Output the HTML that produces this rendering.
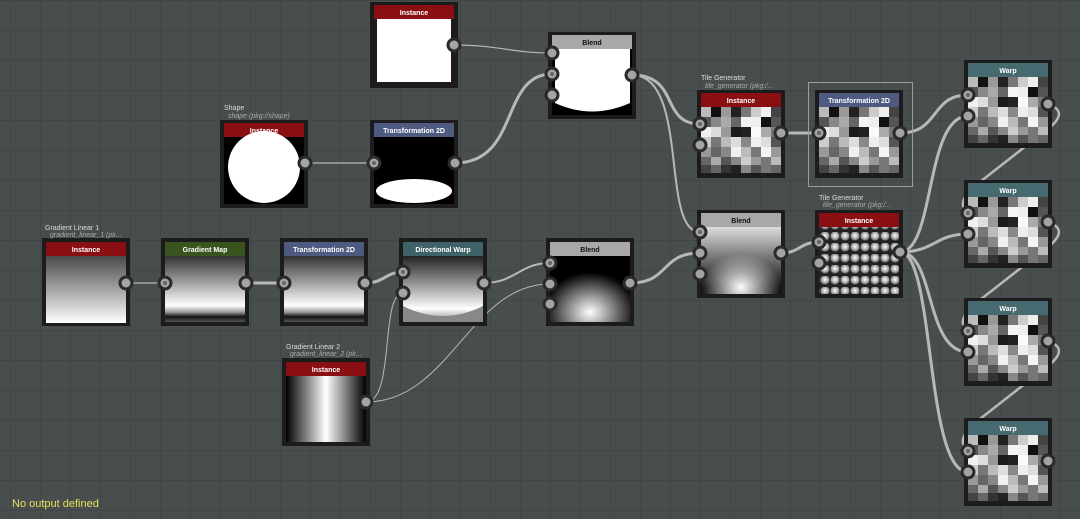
<!DOCTYPE html>
<html><head><meta charset="utf-8"><style>
html,body{margin:0;padding:0;background:#484e4d;overflow:hidden}
svg{display:block}
text{font-family:"Liberation Sans",sans-serif}
</style></head><body>
<svg width="1080" height="519" viewBox="0 0 1080 519" xmlns="http://www.w3.org/2000/svg">
<defs>
<pattern id="grid" x="10" y="0" width="30" height="30" patternUnits="userSpaceOnUse">
<rect width="30" height="30" fill="#484e4d"/>
<path d="M0 0V30M0 0H30" stroke="#414746" stroke-width="2"/>
</pattern>
<pattern id="tiles" patternUnits="objectBoundingBox" width="1" height="1">
<rect width="80" height="66" fill="#888"/>
<g>
<rect x="0" y="0" width="10" height="10" fill="#bbb"/><rect x="10" y="0" width="10" height="10" fill="#111"/><rect x="20" y="0" width="10" height="10" fill="#999"/><rect x="30" y="0" width="10" height="10" fill="#222"/><rect x="40" y="0" width="10" height="10" fill="#777"/><rect x="50" y="0" width="10" height="10" fill="#ccc"/><rect x="60" y="0" width="10" height="10" fill="#eee"/><rect x="70" y="0" width="10" height="10" fill="#444"/>
<rect x="0" y="10" width="10" height="10" fill="#555"/><rect x="10" y="10" width="10" height="10" fill="#888"/><rect x="20" y="10" width="10" height="10" fill="#aaa"/><rect x="30" y="10" width="10" height="10" fill="#666"/><rect x="40" y="10" width="10" height="10" fill="#f4f4f4"/><rect x="50" y="10" width="10" height="10" fill="#eee"/><rect x="60" y="10" width="10" height="10" fill="#111"/><rect x="70" y="10" width="10" height="10" fill="#555"/>
<rect x="0" y="20" width="10" height="10" fill="#f0f0f0"/><rect x="10" y="20" width="10" height="10" fill="#ddd"/><rect x="20" y="20" width="10" height="10" fill="#999"/><rect x="30" y="20" width="10" height="10" fill="#1a1a1a"/><rect x="40" y="20" width="10" height="10" fill="#222"/><rect x="50" y="20" width="10" height="10" fill="#fafafa"/><rect x="60" y="20" width="10" height="10" fill="#aaa"/><rect x="70" y="20" width="10" height="10" fill="#777"/>
<rect x="0" y="30" width="10" height="10" fill="#ccc"/><rect x="10" y="30" width="10" height="10" fill="#777"/><rect x="20" y="30" width="10" height="10" fill="#bbb"/><rect x="30" y="30" width="10" height="10" fill="#ddd"/><rect x="40" y="30" width="10" height="10" fill="#888"/><rect x="50" y="30" width="10" height="10" fill="#eee"/><rect x="60" y="30" width="10" height="10" fill="#ddd"/><rect x="70" y="30" width="10" height="10" fill="#555"/>
<rect x="0" y="40" width="10" height="10" fill="#999"/><rect x="10" y="40" width="10" height="10" fill="#666"/><rect x="20" y="40" width="10" height="10" fill="#888"/><rect x="30" y="40" width="10" height="10" fill="#f0f0f0"/><rect x="40" y="40" width="10" height="10" fill="#bbb"/><rect x="50" y="40" width="10" height="10" fill="#777"/><rect x="60" y="40" width="10" height="10" fill="#f4f4f4"/><rect x="70" y="40" width="10" height="10" fill="#999"/>
<rect x="0" y="50" width="10" height="8" fill="#666"/><rect x="10" y="50" width="10" height="8" fill="#aaa"/><rect x="20" y="50" width="10" height="8" fill="#555"/><rect x="30" y="50" width="10" height="8" fill="#888"/><rect x="40" y="50" width="10" height="8" fill="#ccc"/><rect x="50" y="50" width="10" height="8" fill="#999"/><rect x="60" y="50" width="10" height="8" fill="#777"/><rect x="70" y="50" width="10" height="8" fill="#bbb"/>
<rect x="0" y="58" width="10" height="8" fill="#444"/><rect x="10" y="58" width="10" height="8" fill="#666"/><rect x="20" y="58" width="10" height="8" fill="#333"/><rect x="30" y="58" width="10" height="8" fill="#222"/><rect x="40" y="58" width="10" height="8" fill="#888"/><rect x="50" y="58" width="10" height="8" fill="#555"/><rect x="60" y="58" width="10" height="8" fill="#777"/><rect x="70" y="58" width="10" height="8" fill="#666"/>
</g>
</pattern>
<radialGradient id="sph" cx="0.5" cy="0.4" r="0.6"><stop offset="0" stop-color="#fff"/><stop offset="0.7" stop-color="#999"/><stop offset="1" stop-color="#222"/></radialGradient>
<pattern id="spheres" x="0" y="0" width="10" height="11" patternUnits="userSpaceOnUse">
<rect width="10" height="11" fill="#222"/><rect x="0.5" y="1" width="9" height="9" rx="3" fill="url(#sph)"/>
</pattern>
<linearGradient id="gl" x1="0" y1="0" x2="0" y2="1"><stop offset="0" stop-color="#4a4a4a"/><stop offset="1" stop-color="#fff"/></linearGradient>
<linearGradient id="gm" x1="0" y1="0" x2="0" y2="1"><stop offset="0" stop-color="#333"/><stop offset="0.75" stop-color="#fff"/><stop offset="0.85" stop-color="#999"/><stop offset="0.92" stop-color="#111"/><stop offset="1" stop-color="#555"/></linearGradient>
<linearGradient id="gh" x1="0" y1="0" x2="1" y2="0"><stop offset="0" stop-color="#000"/><stop offset="0.5" stop-color="#fff"/><stop offset="1" stop-color="#000"/></linearGradient>
<linearGradient id="dw" x1="0" y1="0" x2="0" y2="1"><stop offset="0" stop-color="#222"/><stop offset="0.8" stop-color="#fff"/><stop offset="1" stop-color="#888"/></linearGradient>
<radialGradient id="b2" cx="0.5" cy="0.85" r="0.6"><stop offset="0" stop-color="#fff"/><stop offset="1" stop-color="#000"/></radialGradient>
<linearGradient id="b3" x1="0" y1="0" x2="0" y2="1"><stop offset="0" stop-color="#ddd"/><stop offset="0.9" stop-color="#111"/></linearGradient>
<radialGradient id="b3r" cx="0.5" cy="0.9" r="0.5"><stop offset="0" stop-color="#fff"/><stop offset="1" stop-color="#fff" stop-opacity="0"/></radialGradient>
</defs>
<rect width="1080" height="519" fill="url(#grid)"/>

<g fill="none" stroke="#b8b8b8" stroke-linecap="round">
<path d="M454 45 C500 45 510 53 552 53" stroke-width="1.2"/>
<path d="M305 163 H374" stroke-width="1.2"/>
<path d="M455 163 C520 163 500 74 552 74" stroke-width="3"/>
<path d="M632 75 C680 75 660 124 700 124" stroke-width="3"/>
<path d="M632 75 C690 75 660 232 700 232" stroke-width="2"/>
<path d="M781 133 H819" stroke-width="3"/>
<path d="M900 133 C940 133 930 95 968 95" stroke-width="3"/>
<path d="M126 283 H165" stroke-width="1.2"/>
<path d="M246 283 H284" stroke-width="3"/>
<path d="M365 283 C385 283 385 272 403 272" stroke-width="3"/>
<path d="M484 283 C515 283 520 263 550 263" stroke-width="2"/>
<path d="M366 402 C395 402 380 293 403 293" stroke-width="1"/>
<path d="M366 402 C450 402 470 284 550 284" stroke-width="1"/>
<path d="M630 283 C670 283 660 253 700 253" stroke-width="3"/>
<path d="M781 253 C800 253 800 242 819 242" stroke-width="3"/>
<path d="M900 252 C935 252 925 116 968 116" stroke-width="3"/>
<path d="M900 252 C935 252 935 234 968 234" stroke-width="3"/>
<path d="M900 252 C935 252 925 352 968 352" stroke-width="3"/>
<path d="M900 252 C935 252 925 472 968 472" stroke-width="3"/>
<path d="M1048 104 C1065 110 1062 120 1040 135 L985 178 C962 195 958 205 968 213" stroke-width="2.5"/>
<path d="M1048 222 C1065 228 1062 238 1040 253 L985 296 C962 313 958 323 968 331" stroke-width="2.5"/>
<path d="M1048 341 C1065 347 1062 357 1040 372 L985 415 C962 432 958 442 968 451" stroke-width="2.5"/>
</g>

<rect x="808.5" y="82.5" width="104" height="104" fill="none" stroke="#9a9e9e" stroke-width="1"/>

<g font-size="7" fill="#fff" text-anchor="middle" font-weight="bold">
<rect x="370" y="2" width="88" height="86" fill="#1c1c1c"/><rect x="374" y="5" width="80" height="14" fill="#8a0f12"/><text x="414" y="15">Instance</text><rect x="377" y="19" width="74" height="63" fill="#fff"/>
<rect x="548" y="32" width="88" height="87" fill="#1c1c1c"/><rect x="552" y="35" width="80" height="14" fill="#a8a8a8"/><text x="592" y="45" fill="#111">Blend</text><rect x="552" y="49" width="80" height="66" fill="#000"/><path d="M555 49 H630 V103 Q592 120 555 103 Z" fill="#fff"/>
<rect x="220" y="120" width="88" height="88" fill="#1c1c1c"/><rect x="224" y="123" width="80" height="14" fill="#8a0f12"/><text x="264" y="133">Instance</text><rect x="224" y="137" width="80" height="67" fill="#000"/><circle cx="264" cy="167" r="36" fill="#fff"/>
<rect x="370" y="120" width="88" height="88" fill="#1c1c1c"/><rect x="374" y="123" width="80" height="14" fill="#4e5a80"/><text x="414" y="133">Transformation 2D</text><rect x="374" y="137" width="80" height="67" fill="#000"/><ellipse cx="414" cy="191" rx="38" ry="12" fill="#fff"/>
<rect x="697" y="90" width="88" height="88" fill="#1c1c1c"/><rect x="701" y="93" width="80" height="14" fill="#8a0f12"/><text x="741" y="103">Instance</text><rect x="701" y="107" width="80" height="67" fill="url(#tiles)"/>
<rect x="815" y="90" width="88" height="88" fill="#1c1c1c"/><rect x="819" y="93" width="80" height="14" fill="#4e5a80"/><text x="859" y="103">Transformation 2D</text><rect x="819" y="107" width="80" height="67" fill="url(#tiles)"/>
<rect x="964" y="60" width="88" height="88" fill="#1c1c1c"/><rect x="968" y="63" width="80" height="14" fill="#476a70"/><text x="1008" y="73">Warp</text><rect x="968" y="77" width="80" height="67" fill="url(#tiles)"/>
<rect x="964" y="180" width="88" height="88" fill="#1c1c1c"/><rect x="968" y="183" width="80" height="14" fill="#476a70"/><text x="1008" y="193">Warp</text><rect x="968" y="197" width="80" height="67" fill="url(#tiles)"/>
<rect x="964" y="298" width="88" height="88" fill="#1c1c1c"/><rect x="968" y="301" width="80" height="14" fill="#476a70"/><text x="1008" y="311">Warp</text><rect x="968" y="315" width="80" height="67" fill="url(#tiles)"/>
<rect x="964" y="418" width="88" height="88" fill="#1c1c1c"/><rect x="968" y="421" width="80" height="14" fill="#476a70"/><text x="1008" y="431">Warp</text><rect x="968" y="435" width="80" height="67" fill="url(#tiles)"/>
<rect x="42" y="238" width="88" height="88" fill="#1c1c1c"/><rect x="46" y="242" width="80" height="14" fill="#8a0f12"/><text x="86" y="252">Instance</text><rect x="46" y="256" width="80" height="67" fill="url(#gl)"/>
<rect x="161" y="238" width="88" height="88" fill="#1c1c1c"/><rect x="165" y="242" width="80" height="14" fill="#3a5420"/><text x="205" y="252">Gradient Map</text><rect x="165" y="256" width="80" height="66" fill="url(#gm)"/>
<rect x="280" y="238" width="88" height="88" fill="#1c1c1c"/><rect x="284" y="242" width="80" height="14" fill="#4e5a80"/><text x="324" y="252">Transformation 2D</text><rect x="284" y="256" width="80" height="66" fill="url(#gm)"/>
<rect x="399" y="238" width="88" height="88" fill="#1c1c1c"/><rect x="403" y="242" width="80" height="14" fill="#3e6268"/><text x="443" y="252">Directional Warp</text><rect x="403" y="256" width="80" height="66" fill="url(#dw)"/><path d="M403 306 Q443 326 483 306 V322 H403Z" fill="#888"/>
<rect x="546" y="238" width="88" height="88" fill="#1c1c1c"/><rect x="550" y="242" width="80" height="14" fill="#a8a8a8"/><text x="590" y="252" fill="#111">Blend</text><rect x="550" y="256" width="80" height="66" fill="url(#b2)"/>
<rect x="697" y="210" width="88" height="88" fill="#1c1c1c"/><rect x="701" y="213" width="80" height="14" fill="#a8a8a8"/><text x="741" y="223" fill="#111">Blend</text><rect x="701" y="227" width="80" height="67" fill="url(#b3)"/><rect x="701" y="227" width="80" height="67" fill="url(#b3r)"/>
<rect x="815" y="210" width="88" height="88" fill="#1c1c1c"/><rect x="819" y="213" width="80" height="14" fill="#8a0f12"/><text x="859" y="223">Instance</text><rect x="819" y="227" width="80" height="67" fill="url(#spheres)"/>
<rect x="282" y="358" width="88" height="88" fill="#1c1c1c"/><rect x="286" y="362" width="80" height="14" fill="#8a0f12"/><text x="326" y="372">Instance</text><rect x="286" y="376" width="80" height="66" fill="url(#gh)"/>
</g>

<g fill="#a4a4a4" stroke="#2a2a2a" stroke-width="3">
<circle cx="454" cy="45" r="6"/>
<circle cx="552" cy="53" r="6"/><circle cx="552" cy="74" r="6"/><circle cx="552" cy="95" r="6"/><circle cx="632" cy="75" r="6"/>
<circle cx="305" cy="163" r="6"/><circle cx="374" cy="163" r="6"/><circle cx="455" cy="163" r="6"/>
<circle cx="700" cy="124" r="6"/><circle cx="700" cy="145" r="6"/><circle cx="781" cy="133" r="6"/>
<circle cx="819" cy="133" r="6"/><circle cx="900" cy="133" r="6"/>
<circle cx="968" cy="95" r="6"/><circle cx="968" cy="116" r="6"/><circle cx="1048" cy="104" r="6"/>
<circle cx="968" cy="213" r="6"/><circle cx="968" cy="234" r="6"/><circle cx="1048" cy="222" r="6"/>
<circle cx="968" cy="331" r="6"/><circle cx="968" cy="352" r="6"/><circle cx="1048" cy="341" r="6"/>
<circle cx="968" cy="451" r="6"/><circle cx="968" cy="472" r="6"/><circle cx="1048" cy="461" r="6"/>
<circle cx="126" cy="283" r="6"/><circle cx="165" cy="283" r="6"/><circle cx="246" cy="283" r="6"/>
<circle cx="284" cy="283" r="6"/><circle cx="365" cy="283" r="6"/>
<circle cx="403" cy="272" r="6"/><circle cx="403" cy="293" r="6"/><circle cx="484" cy="283" r="6"/>
<circle cx="550" cy="263" r="6"/><circle cx="550" cy="284" r="6"/><circle cx="550" cy="304" r="6"/><circle cx="630" cy="283" r="6"/>
<circle cx="700" cy="232" r="6"/><circle cx="700" cy="253" r="6"/><circle cx="700" cy="274" r="6"/><circle cx="781" cy="253" r="6"/>
<circle cx="819" cy="242" r="6"/><circle cx="819" cy="263" r="6"/><circle cx="900" cy="252" r="6"/>
<circle cx="366" cy="402" r="6"/>
</g>
<g fill="#666">
<circle cx="552" cy="74" r="2"/><circle cx="374" cy="163" r="2"/><circle cx="700" cy="124" r="2"/><circle cx="819" cy="133" r="2"/><circle cx="968" cy="95" r="2"/><circle cx="968" cy="213" r="2"/><circle cx="968" cy="331" r="2"/><circle cx="968" cy="451" r="2"/><circle cx="165" cy="283" r="2"/><circle cx="284" cy="283" r="2"/><circle cx="403" cy="272" r="2"/><circle cx="550" cy="263" r="2"/><circle cx="700" cy="232" r="2"/><circle cx="819" cy="242" r="2"/>
</g>

<g font-size="7">
<text x="224" y="110" fill="#ddd">Shape</text><text x="228" y="118" fill="#aaa" font-style="italic">shape (pkg://shape)</text>
<text x="45" y="230" fill="#ddd">Gradient Linear 1</text><text x="50" y="237" fill="#aaa" font-style="italic">gradient_linear_1 (pk...</text>
<text x="701" y="80" fill="#ddd">Tile Generator</text><text x="705" y="88" fill="#aaa" font-style="italic">tile_generator (pkg:/...</text>
<text x="819" y="200" fill="#ddd">Tile Generator</text><text x="823" y="207" fill="#aaa" font-style="italic">tile_generator (pkg:/...</text>
<text x="286" y="349" fill="#ddd">Gradient Linear 2</text><text x="290" y="356" fill="#aaa" font-style="italic">gradient_linear_2 (pk...</text>
</g>
<text x="12" y="507" font-size="11" fill="#e6e05a">No output defined</text>
</svg>
</body></html>
